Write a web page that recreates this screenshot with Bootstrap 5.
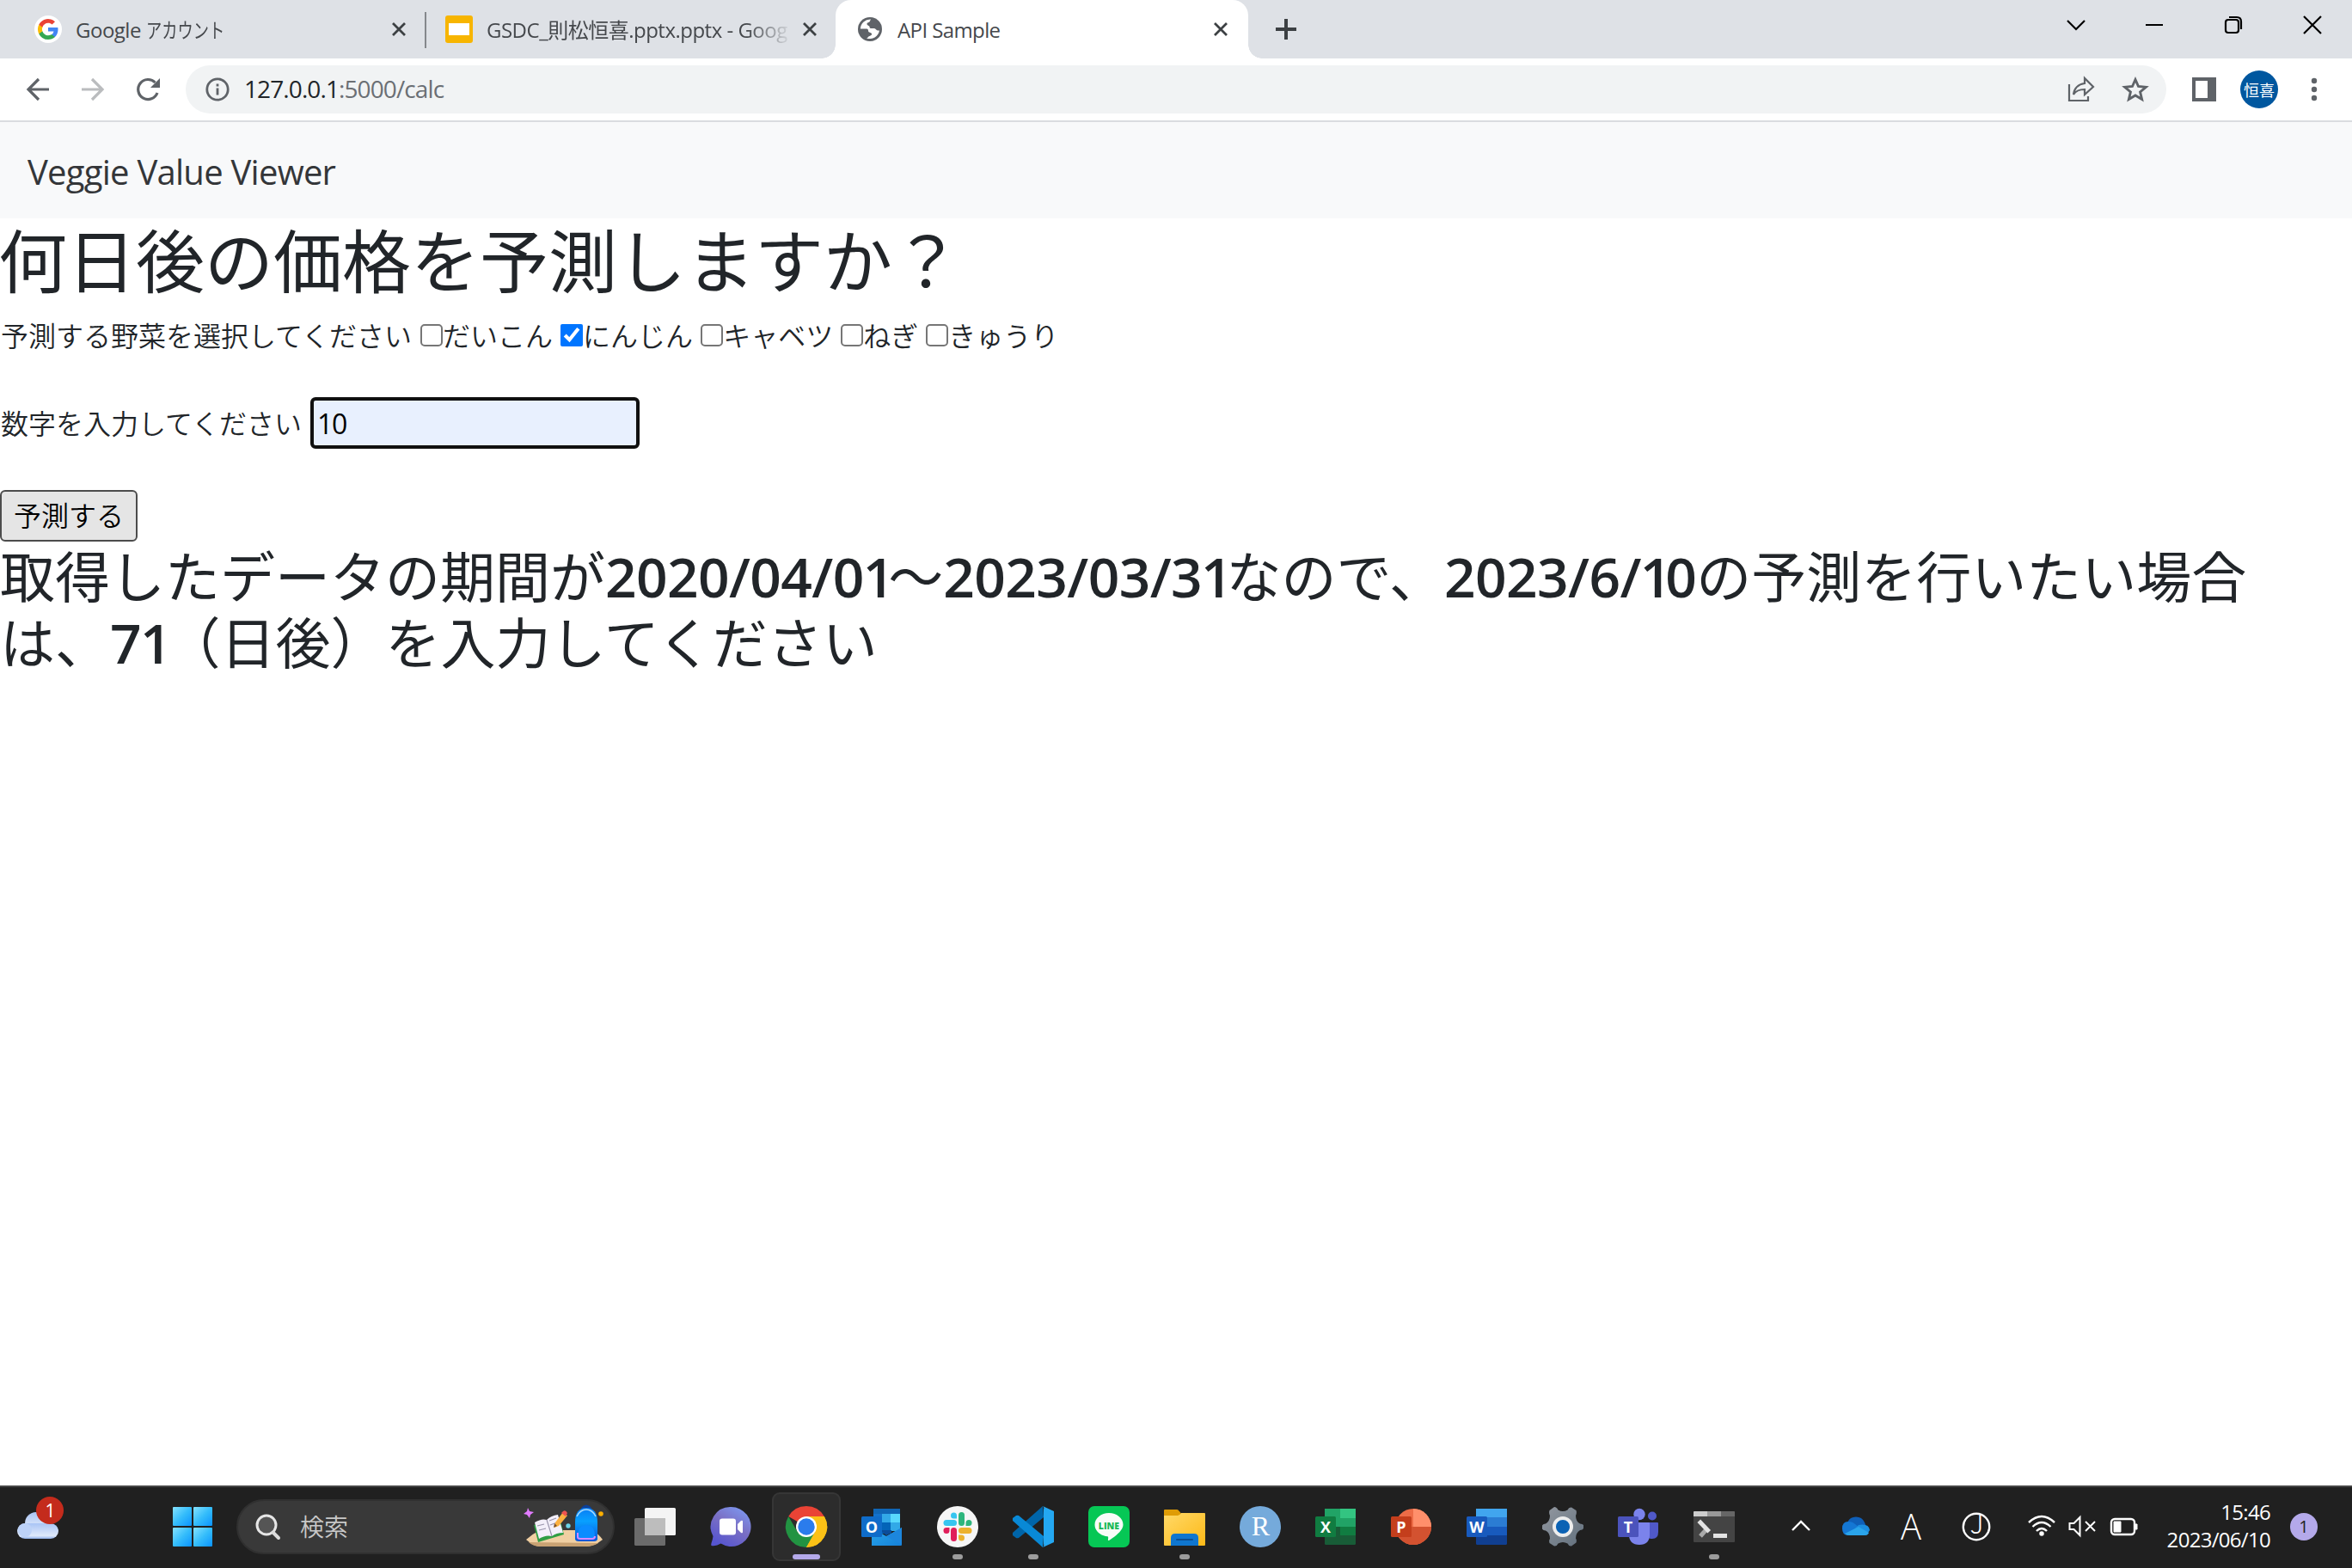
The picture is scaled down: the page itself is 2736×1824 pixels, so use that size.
<!DOCTYPE html>
<html lang="ja">
<head>
<meta charset="utf-8">
<title>API Sample</title>
<link href="https://cdn.jsdelivr.net/npm/bootstrap@5.3.0/dist/css/bootstrap.min.css" rel="stylesheet">
<style>
html{font-size:32px}
body{font-family:"Open Sans","Noto Sans CJK JP",sans-serif;color:#212529;overflow:hidden;width:2736px;height:1824px;font-weight:400}
svg{display:block;flex:none;overflow:visible}
.strip{height:68px;background:#dee1e6;font-size:24px;color:#45484c;padding-left:16px}
.tab-cell{width:476px;padding:0 22px;gap:16px;height:68px;position:relative}
.tab-cell.sep{width:480px;padding-left:24px;border-right:2px solid #85888c;border-image:linear-gradient(transparent 15px,#85888c 15px,#85888c 55px,transparent 55px) 1}
.tab-cell.current{width:480px;background:#fff;border-radius:18px 18px 0 0;padding:0 24px}
.tab-cell.current::before,.tab-cell.current::after{content:"";position:absolute;bottom:0;width:16px;height:16px}
.tab-cell.current::before{left:-16px;background:radial-gradient(circle at 0 0,transparent 15.5px,#fff 16px)}
.tab-cell.current::after{right:-16px;background:radial-gradient(circle at 100% 0,transparent 15.5px,#fff 16px)}
.tab-title{flex:1 1 0;white-space:nowrap;overflow:hidden;line-height:36px;padding-top:2px}
.fade-end{-webkit-mask-image:linear-gradient(90deg,#000 86%,transparent 101%)}
.narrow{display:inline-block;transform:scaleX(.76);transform-origin:0 50%;letter-spacing:0}
.g-t{letter-spacing:-.5px}.s-t{letter-spacing:-.5px}.a-t{letter-spacing:-.6px}
.toolbar{height:74px;border-bottom:2px solid #dadce0;background:#fff;padding-left:28px}
.omni{width:2304px;height:56px;background:#f1f3f4;border-radius:28px;margin-left:26px;padding:0 20px 0 22px;font-size:28px;color:#6b6f74;letter-spacing:-.9px}
.omni .addr{padding:0 0 2px 16px}
.avatar{width:44px;height:44px;border-radius:50%;background:#00579f;color:#fff;font-size:18px;font-family:"Noto Sans CJK JP",sans-serif}
.site-nav{height:112px;background:#f8f9fa;padding:3px 32px 0}
.site-nav .navbar-brand{font-size:40px;letter-spacing:-.75px;color:#343639}
.page-body{height:1474px}
.page-body h1{font-size:80px;line-height:90px;height:96px;margin:0 0 16px -2px;font-weight:400;font-family:"Noto Sans CJK JP",sans-serif}
.page-body h2{font-size:64px;line-height:76.8px;font-weight:400;margin:-1px 0 0;white-space:nowrap}
.page-body h2 b{font-family:"Open Sans",sans-serif;font-weight:600;letter-spacing:-.6px;line-height:1}
.page-body h2 b i{font-style:normal;letter-spacing:-7px;margin-left:-1px}
.light{font-family:"Noto Sans CJK JP",sans-serif;font-weight:350}
.line{height:48px;line-height:44px;font-size:32px;gap:9px}
.line label,.line span{white-space:nowrap}
.line>span,.line label>span{padding-bottom:3px}
.line>span{padding-left:1px;padding-right:1px}
.line input[type=checkbox]{width:26px;height:26px;margin:0;flex:none}
.line input[type=checkbox]:not(:checked){appearance:none;border:2px solid #767676;border-radius:5px;background:#fff}
.entry{height:60px;margin-top:48px}
.days{width:383px;height:60px;border:4px solid #101010;border-radius:6px;background:#e8f0fe;padding:0 4px;font-family:"Open Sans",sans-serif;font-size:32px;letter-spacing:-1.5px;color:#000;outline:0}
.go{width:160px;height:60px;border:2px solid #4c4c4c;border-radius:6px;background:#e5e5e5;color:#000;font-size:32px;line-height:50px;padding:0 0 4px;margin-top:48px}
.taskbar{height:96px;background:#202020;border-top:2px solid #464646;padding-bottom:2px;color:#fff;font-size:24px}
.cell{width:80px;height:80px;margin-right:8px;border-radius:9px;flex:none;position:relative}
.cell.on{background:#2c2c2c;border:2px solid #363636}
.cell.run::after,.cell.on::after{content:"";position:absolute;bottom:2px;left:34px;width:12px;height:6px;border-radius:3px;background:#9c9c9c}
.cell.on::after{background:#b4a9ea;width:32px;left:22px;bottom:0}
.finder{width:440px;height:64px;border-radius:32px;background:#393939;border:2px solid #303030;margin:0 7px 0 11px;padding:0 12px 0 20px;color:#c8c8c8;font-size:28px}
.finder span{margin-left:22px;padding-bottom:3px}
.clock{width:140px;font-size:24px;line-height:32px;letter-spacing:-.7px;margin-left:9px;padding-bottom:2px}
.bell{width:32px;height:32px;border-radius:50%;background:#b4a9ea;color:#222;font-size:20px;line-height:32px;margin:0 40px 0 23px}
svg text{font-family:"Open Sans",sans-serif}
</style>
<script src="https://cdn.jsdelivr.net/npm/bootstrap@5.3.0/dist/js/bootstrap.bundle.min.js"></script>
</head>
<body>
<svg width="0" height="0" class="position-absolute">
 <defs>
  <linearGradient id="win" x1="0" y1="0" x2="1" y2="1"><stop stop-color="#86e2ff"/><stop offset=".5" stop-color="#35bdfb"/><stop offset="1" stop-color="#0a93ff"/></linearGradient>
  <linearGradient id="cl" x1="0" y1="0" x2="1" y2="1"><stop stop-color="#7fa6ee"/><stop offset="1" stop-color="#eef4fd"/></linearGradient>
  <linearGradient id="cl2" x1="0" y1="0" x2="0" y2="1"><stop stop-color="#a9c4f5"/><stop offset=".8" stop-color="#dfe9fa"/><stop offset="1" stop-color="#8fb0ea"/></linearGradient>
  <linearGradient id="chat" x1=".9" y1="0" x2=".3" y2="1"><stop stop-color="#7d9cf5"/><stop offset=".5" stop-color="#7a6fc4"/><stop offset="1" stop-color="#5655cf"/></linearGradient>
  <linearGradient id="fold" x1="0" y1="0" x2="1" y2="1"><stop stop-color="#ffd968"/><stop offset="1" stop-color="#fdb917"/></linearGradient>
  <linearGradient id="gear" x1="0" y1="0" x2="1" y2="1"><stop stop-color="#9398a0"/><stop offset="1" stop-color="#62707d"/></linearGradient>
  <linearGradient id="bag" x1="0" y1="0" x2="0" y2="1"><stop stop-color="#0a7cf4"/><stop offset=".4" stop-color="#08a0ff"/><stop offset="1" stop-color="#0b54d8"/></linearGradient>
  <linearGradient id="outl" x1="0" y1="0" x2="1" y2="1"><stop stop-color="#2aa7ea"/><stop offset="1" stop-color="#1580d8"/></linearGradient>
  <symbol id="x" viewBox="0 0 16 16"><path d="M1 1l14 14M15 1L1 15" stroke="#3c4043" stroke-width="2.8"/></symbol>
 </defs>
</svg>

<div class="strip d-flex">
 <div class="tab-cell sep d-flex align-items-center">
  <svg width="32" height="32" viewBox="0 0 32 32"><circle cx="16" cy="16" r="16" fill="#fff"/><g transform="translate(4 4)"><path fill="#4285f4" d="M23.5 12.3c0-.8-.1-1.6-.2-2.3H12v4.5h6.5a5.500 5.500 0 0 1-2.400 3.600v3h3.900c2.200-2.100 3.500-5.200 3.500-8.800z"/><path fill="#34a853" d="M12 24c3.200 0 6-1.100 8-2.900l-3.900-3c-1.100.7-2.500 1.200-4.100 1.200-3.100 0-5.800-2.100-6.700-5H1.300v3.100A12 12 0 0 0 12 24z"/><path fill="#fbbc05" d="M5.300 14.300a7.200 7.200 0 0 1 0-4.600V6.600H1.300a12 12 0 0 0 0 10.800z"/><path fill="#ea4335" d="M12 4.800c1.800 0 3.300.6 4.600 1.800L20 3.200A12 12 0 0 0 1.300 6.600l4 3.100c.9-2.800 3.600-4.900 6.700-4.900z"/></g></svg>
  <div class="tab-title g-t">Google <span class="narrow">アカウント</span></div>
  <svg width="16" height="16"><use href="#x"/></svg>
 </div>
 <div class="tab-cell d-flex align-items-center">
  <svg width="32" height="32"><rect width="32" height="32" rx="3" fill="#f7b500"/><path fill="#fff" d="M4 9h24v14H4z"/></svg>
  <div class="tab-title s-t fade-end">GSDC_則松恒喜.pptx.pptx - Goog</div>
  <svg width="16" height="16"><use href="#x"/></svg>
 </div>
 <div class="tab-cell current d-flex align-items-center">
  <svg width="32" height="32" viewBox="0 0 32 32"><circle cx="16" cy="16" r="14" fill="#5f6368"/><path fill="#fff" d="M17 4.500c-1 1.500-1 3-2.500 3.500-2 .5-2.500 1.500-1.500 3 .8 1.200 2 .5 2.500 2 .3 1 0 2 1.500 2h4c2 0 2 2.500 4 2.500h2A11.500 11.500 0 0 1 12 26.500c2-.5 1.500-2 3.500-2.500 2-.6 3.500-2 2-3.500-1.200-1-3.500-.5-3.500-3 0-1.500-1-2-2.500-2H4.800A11.500 11.500 0 0 1 17 4.500z"/></svg>
  <div class="tab-title a-t">API Sample</div>
  <svg width="16" height="16"><use href="#x"/></svg>
 </div>
 <svg class="align-self-center" style="margin-left:32px" width="24" height="24"><path d="M12 0v24M0 12h24" stroke="#3c4043" stroke-width="4"/></svg>
 <svg class="ms-auto" width="331" height="68" viewBox="2405 0 331 68" fill="none" stroke="#000" stroke-width="2.200"><path d="M2405 24l10 10 10-10M2496 29h20M2680 19l20 20M2700 19l-20 20"/><rect x="2589" y="23" width="15" height="15" rx="3"/><path d="M2593 20h9q5 0 5 5v9"/></svg>
</div>

<div class="toolbar d-flex align-items-center">
 <svg width="162" height="32" viewBox="28 88 162 32" fill="none" stroke-width="3.200"><path d="M57 104H33M45 92l-12 12 12 12" stroke="#5f6368"/><path d="M95 104h24M107 92l12 12-12 12" stroke="#babcbe"/><path d="M183 108a11.500 11.500 0 1 1-2.500-12" stroke="#5f6368"/><path d="M186 91v11h-11z" fill="#5f6368"/></svg>
 <div class="omni d-flex align-items-center">
  <svg width="30" height="30" viewBox="0 0 30 30"><circle cx="15" cy="15" r="12.200" fill="none" stroke="#5f6368" stroke-width="2.800"/><path d="M15 13.500v8M15 8.500v3" stroke="#5f6368" stroke-width="2.800"/></svg>
  <div class="addr"><span class="text-dark">127.0.0.1</span>:5000/calc</div>
  <svg class="ms-auto" width="96" height="32" viewBox="2404 88 96 32" fill="none" stroke="#5f6368" stroke-width="2.200"><path d="M2407 98v19h22v-5"/><path d="M2412 110c1-8 6-12 13-13v-6l10 10-10 9v-6c-6 0-10 1-13 6z"/><path d="M2484 92.500l3.500 8 8.800.8-6.700 5.700 2 8.500-7.600-4.600-7.600 4.600 2-8.500-6.700-5.700 8.800-.8z" stroke-width="2.900"/></svg>
 </div>
 <svg style="margin-left:30px" width="28" height="28"><path fill="#5f6368" fill-rule="evenodd" d="M0 0h28v28H0zM4 4v20h14V4z"/></svg>
 <div class="avatar d-flex align-items-center justify-content-center" style="margin-left:28px">恒喜</div>
 <svg style="margin-left:39px" width="6" height="28" fill="#5f6368"><circle cx="3" cy="4" r="3.200"/><circle cx="3" cy="14" r="3.200"/><circle cx="3" cy="24" r="3.200"/></svg>
</div>

<nav class="navbar site-nav"><a class="navbar-brand m-0 p-0" href="#">Veggie Value Viewer</a></nav>

<main class="page-body">
 <h1>何日後の価格を予測しますか？</h1>
 <div class="line light d-flex align-items-center">
  <span>予測する野菜を選択してください</span>
  <label class="d-flex align-items-center"><input type="checkbox"><span>だいこん</span></label>
  <label class="d-flex align-items-center"><input type="checkbox" checked><span>にんじん</span></label>
  <label class="d-flex align-items-center"><input type="checkbox"><span>キャベツ</span></label>
  <label class="d-flex align-items-center"><input type="checkbox"><span>ねぎ</span></label>
  <label class="d-flex align-items-center"><input type="checkbox"><span>きゅうり</span></label>
 </div>
 <div class="line entry light d-flex align-items-center"><span>数字を入力してください</span><input class="days" type="text" value="10"></div>
 <button class="go light d-block">予測する</button>
 <h2 class="light">取得したデータの期間が<b>2020/04/0<i>1</i></b>～<b>2023/03/3<i>1</i></b>なので、<b>2023/6/<i>1</i>0</b>の予測を行いたい場合<br>は、<b>7<i>1</i></b>（日後）を入力してください</h2>
</main>

<footer class="taskbar d-flex align-items-center">
 <svg width="184" height="94" viewBox="0 1730 184 94"><path d="M29 1779a13 13 0 0 1 25-6z" fill="url(#cl)"/><path d="M29 1773a13 13 0 0 1 26 0v10H29z" fill="url(#cl2)"/><rect x="20" y="1773" width="48" height="18" rx="9" fill="url(#cl2)"/><circle cx="29" cy="1781" r="8" fill="#bdd2f7"/><circle cx="58" cy="1758" r="16" fill="#c42b1c"/><text x="58.500" y="1766" font-size="21" fill="#fff" text-anchor="middle">1</text></svg>
 <div class="cell me-0 d-flex align-items-center justify-content-center"><svg width="46" height="46" fill="url(#win)"><rect width="22" height="22" rx="1"/><rect x="24" width="22" height="22" rx="1"/><rect y="24" width="22" height="22" rx="1"/><rect x="24" y="24" width="22" height="22" rx="1"/></svg></div>
 <div class="finder d-flex align-items-center">
  <svg width="30" height="32" viewBox="0 0 30 32"><circle cx="13" cy="14" r="11" fill="#555" stroke="#e6e6e6" stroke-width="3"/><path d="M20.500 22.500l6.500 6.500" stroke="#ddd" stroke-width="4" stroke-linecap="round"/></svg>
  <span class="light">検索</span>
  <svg class="ms-auto" width="92" height="52" viewBox="609 1753 92 52"><path d="M612 1794q8-7 16-11h61q8 5 12 11-10 8-20 8h-53q-8-1-16-8z" fill="#f0cfa2"/><path d="M615 1797q5 5 14 5h52q9 0 15-4z" fill="#c9a273"/><path d="M621 1777l30-8 5 19-30 9z" fill="#2f9e44"/><path d="M622 1774q8-5 14-3 5-5 13-6l6 21q-8 0-13 4-7-2-15 3z" fill="#f3effa"/><path d="M636 1771l6 19M625 1778l8-2M627 1783l8-2M639 1772l8-3M640 1777l8-3" stroke="#9a95ad" stroke-width="1.200"/><path d="M655 1762l5 4-10 12-5 2 1-6z" fill="#fbb040"/><path d="M655 1761q3-2 5 2l-2 4-5-4z" fill="#ef5350"/><path d="M645 1775l-1 5 4-2z" fill="#7a4f2a"/><path d="M614 1757l2 4 5 1-4 3-1 4-3-4-4-1 4-3z" fill="#e27cff"/><circle cx="661" cy="1778" r="2.700" fill="#6bd5e8"/><circle cx="699" cy="1764" r="2.800" fill="#ffb000"/><path d="M677 1758q5-6 10 0" stroke="#0b3f9a" stroke-width="3" fill="none"/><path d="M669 1774q0-17 13-17t13 17v19q0 3-4 3h-18q-4 0-4-3z" fill="url(#bag)"/><path d="M671 1767q4-8 11-8t11 8" fill="none" stroke="#a8dcff" stroke-width="1.500"/><path d="M672 1790q0-13 10-13t10 13v3h-20z" fill="#0b8cff"/><path d="M672 1786v5q0 2 3 2h14q3 0 3-3" fill="none" stroke="#d68aff" stroke-width="2"/></svg>
 </div>
 <!-- pinned apps -->
 <div class="cell d-flex align-items-center justify-content-center"><svg width="48" height="48"><rect x="12" y="2" width="36" height="32" rx="1.500" fill="#f4f4f4"/><rect y="14" width="36" height="32" rx="1.500" fill="#6b6b6b"/><path d="M12 14h24v20H12z" fill="#bdbdbd"/></svg></div>
 <div class="cell d-flex align-items-center justify-content-center"><svg width="48" height="48"><path d="M24.500 1a23 23 0 1 1-12 42.600Q7 47 1.500 46q-.5-1 0-3 1.500-4 2-8A23 23 0 0 1 24.500 1z" fill="url(#chat)"/><rect x="11" y="14.500" width="19" height="19" rx="3" fill="#fff"/><path d="M32 21l4-4q2-1 2 1v12q0 2-2 1l-4-4z" fill="#fff"/></svg></div>
 <div class="cell on d-flex align-items-center justify-content-center"><svg width="48" height="48" viewBox="0 0 48 48"><path d="M24 24L3.200 12A24 24 0 0 1 44.800 12z" fill="#ea4335"/><path d="M24 24L44.800 12A24 24 0 0 1 24 48z" fill="#fbc116"/><path d="M3.200 12L14 30.500 34 30 24 48A24 24 0 0 1 3.200 12z" fill="#229342"/><path d="M24 12h20.800A24 24 0 0 1 24 48l10.400-18z" fill="#fbc116"/><circle cx="24" cy="24" r="12" fill="#fff"/><circle cx="24" cy="24" r="9.700" fill="#2b7cec"/></svg></div>
 <div class="cell d-flex align-items-center justify-content-center"><svg width="48" height="48"><path d="M14 3h31v26H14z" fill="#1066b5"/><path d="M14 9h10v20H14z" fill="#1372cc"/><path d="M24 9h10v10H24z" fill="#32a9e7"/><path d="M34 9h11v10H34z" fill="#58d9fd"/><path d="M24 19h10v13H24z" fill="#0364b8"/><path d="M34 19h11v10H34z" fill="#32a9e7"/><path d="M12 25l17 10 18-10v20q0 1-1 1H12z" fill="url(#outl)"/><path d="M24 30l5 4 6-3v-3H24z" fill="#0a4c9a"/><path d="M47 25v20L29 35z" fill="#1c86dd"/><rect y="12" width="24" height="24" rx="1.500" fill="#0f6cc9"/><text x="12" y="30.500" font-size="18" font-weight="700" fill="#fff" text-anchor="middle">O</text></svg></div>
 <div class="cell run d-flex align-items-center justify-content-center"><svg width="48" height="48"><circle cx="24" cy="24" r="24" fill="#f6f6f6"/><g fill="#36c5f0"><rect x="7.500" y="16" width="15.500" height="7" rx="3.500"/><path d="M23 14.500h-3.500a3.500 3.500 0 1 1 3.500-3.500z"/></g><g fill="#2eb67d"><rect x="25" y="7" width="7" height="16" rx="3.500"/><path d="M33.500 23v-3.500A3.500 3.500 0 1 1 37 23z"/></g><g fill="#ecb22e"><rect x="25" y="25" width="15.500" height="7" rx="3.500"/><path d="M25 33.500h3.500A3.500 3.500 0 1 1 25 37z"/></g><g fill="#e01e5a"><rect x="16" y="25" width="7" height="16" rx="3.500"/><path d="M14.500 25v3.500A3.500 3.500 0 1 1 11 25z"/></g></svg></div>
 <div class="cell run d-flex align-items-center justify-content-center"><svg width="48" height="48"><path d="M35 0L0 31v3l4 3q1 .5 3 0L36 13z" fill="#0065a9"/><path d="M35 48L0 17v-3l4-3q1-.5 3 0L36 35z" fill="#0989d6"/><path d="M35 0l13 6v36l-13 6q2-1 1-4V4q1-3-1-4z" fill="#24a8f2"/></svg></div>
 <div class="cell d-flex align-items-center justify-content-center"><svg width="48" height="48"><rect width="48" height="48" rx="7" fill="#06c755"/><path d="M24 8c9 0 16.500 6 16.500 13.500S30 36 24 40q-1.500.5-1-1.500.5-3-.5-3.200C14 34.500 7.500 29 7.500 21.500S15 8 24 8z" fill="#f8fcf8"/><text x="24" y="26.500" font-size="10.500" font-weight="800" fill="#19b956" text-anchor="middle">LINE</text></svg></div>
 <div class="cell run d-flex align-items-center justify-content-center"><svg width="48" height="48"><path d="M0 12V5q0-1 1-1h14q2 0 5 5v4z" fill="#df9c06"/><path d="M0 11h16q2 0 4-3h27q1 0 1 1v36q0 1-1 1H1q-1 0-1-1z" fill="url(#fold)"/><path d="M8 46V37q0-5 5-5h22q5 0 5 5v9z" fill="#0f76cf"/><path d="M15 39h18" stroke="#0a4f94" stroke-width="2" stroke-linecap="round"/></svg></div>
 <div class="cell d-flex align-items-center justify-content-center"><svg width="48" height="48"><circle cx="24" cy="24" r="24" fill="#75aadb"/><text x="24.500" y="34" font-size="32" fill="#fff" text-anchor="middle" style="font-family:'Liberation Serif',serif">R</text></svg></div>
 <div class="cell d-flex align-items-center justify-content-center"><svg width="48" height="48"><rect x="11" y="3" width="36" height="42" rx="1.500" fill="#185c37"/><path d="M11 3h18v11H11zM11 14h18v10H11z" fill="#21a366"/><path d="M29 3h18v11H29z" fill="#33c481"/><path d="M29 14h18v10H29z" fill="#21a366"/><path d="M29 24h18v10H29z" fill="#107c41"/><rect y="12" width="24" height="24" rx="1.500" fill="#107c41"/><text x="12" y="30.500" font-size="18" font-weight="700" fill="#fff" text-anchor="middle">X</text></svg></div>
 <div class="cell d-flex align-items-center justify-content-center"><svg width="48" height="48"><circle cx="26" cy="24" r="21" fill="#ed6c47"/><path d="M26 3a21 21 0 0 1 21 21H26z" fill="#ff8f6b"/><path d="M5 24h42a21 21 0 0 1-42 0z" fill="#d35230"/><rect y="12" width="24" height="24" rx="1.500" fill="#c43e1c"/><text x="12" y="30.500" font-size="18" font-weight="700" fill="#fff" text-anchor="middle">P</text></svg></div>
 <div class="cell d-flex align-items-center justify-content-center"><svg width="48" height="48"><rect x="11" y="3" width="36" height="42" rx="1.500" fill="#103f91"/><path d="M11 3h36v10H11z" fill="#41a5ee"/><path d="M11 13h36v11H11z" fill="#2b7cd3"/><path d="M11 24h36v10H11z" fill="#185abd"/><rect y="12" width="24" height="24" rx="1.500" fill="#185abd"/><text x="12" y="30.500" font-size="18" font-weight="700" fill="#fff" text-anchor="middle">W</text></svg></div>
 <div class="cell d-flex align-items-center justify-content-center"><svg width="48" height="48"><path d="M14 1q3 0 4.500 3.500 5.500 3 11 0Q31 1 34 1.500l5.500 3.500q1 3-.5 6 0 7 5 9.500 3 0 4 1.500v4q-1 2-4 2-5 3-5 9.500 1.500 2 .5 5L34 46.500q-3 .5-4.500-3-5.500-3-11 0Q17 47 14 46.500L8.500 43q-1-3 .5-5 0-7-5-9.500-3 0-4-2v-4q1-2 4-2 5-3 5-9.500-1.500-3-.5-6z" fill="url(#gear)"/><circle cx="24" cy="24" r="10" fill="#0b62b4" stroke="#ededed" stroke-width="4"/></svg></div>
 <div class="cell d-flex align-items-center justify-content-center"><svg width="48" height="48"><circle cx="40" cy="11.500" r="5" fill="#5059c9"/><path d="M35 19h11q1 0 1 1v10q0 8-7 8-4 0-5-2z" fill="#5059c9"/><circle cx="25" cy="9.500" r="6.700" fill="#7b83eb"/><path d="M13 19h23q1 0 1 1v13q0 12-12 12t-12-12z" fill="#7b83eb"/><rect y="12" width="24" height="24" rx="1.500" fill="#4b53bc"/><text x="12" y="30.500" font-size="18" font-weight="700" fill="#fff" text-anchor="middle">T</text></svg></div>
 <div class="cell run me-0 d-flex align-items-center justify-content-center"><svg width="48" height="48"><rect y="6" width="48" height="36" rx="1" fill="#444"/><path d="M0 12V7q0-1 1-1h15v6z" fill="#ccc"/><path d="M16 6h16v6H16z" fill="#999"/><path d="M32 6h15q1 0 1 1v5H32z" fill="#666"/><path d="M16 26l-8 9" stroke="#aaa" stroke-width="5"/><path d="M8 19l8.500 9" stroke="#e4e4e4" stroke-width="5" stroke-linecap="square" stroke-linejoin="round"/><path d="M23 32h16v5H23z" fill="#e4e4e4"/></svg></div>
 <!-- system tray -->
 <svg class="ms-auto" width="410" height="92" viewBox="2082 1730 410 92" fill="none" stroke="#fff" stroke-width="2.400"><path d="M2085 1780l10-10 10 10"/><g stroke="none"><path d="M2149 1771a11 11 0 0 1 20 0l2 5-16 6z" fill="#0f5fb8"/><path d="M2143 1778q0-8 7-8 5 0 8 3l10 8-15 5h-4q-6-1-6-8z" fill="#1477d4"/><path d="M2162 1774q12-2 13 6l-4 6-13-8z" fill="#1b8ee0"/><path d="M2146 1784l16-8 12 7q-1 3-5 3h-18q-3 0-5-2z" fill="#2aa4ea"/><text x="2223" y="1791" font-size="42" fill="#fff" text-anchor="middle" textLength="24" lengthAdjust="spacingAndGlyphs" style="font-weight:300">A</text><text x="2299.500" y="1784" font-size="31" fill="#fff" text-anchor="middle" style="font-family:'Noto Sans CJK JP';font-weight:300">J</text></g><circle cx="2299" cy="1776" r="15.200"/><path d="M2360 1771q15-14 30 0M2364.500 1776q10.500-10 21 0M2369 1781q6-6 12 0"/><circle cx="2375" cy="1784" r="2" fill="#fff" stroke-width="1.500"/><path d="M2407.500 1772h5l7-7v21l-7-7h-5zM2426 1770l11 11M2437 1770l-11 11" stroke-width="2"/><rect x="2456" y="1767" width="27" height="18" rx="4"/><path d="M2459 1770h8v12h-8zM2484 1773h2v6h-2z" fill="#fff" stroke-width="1"/></svg>
 <div class="clock text-end">15:46<br>2023/06/10</div>
 <div class="bell text-center">1</div>
</footer>
</body>
</html>
